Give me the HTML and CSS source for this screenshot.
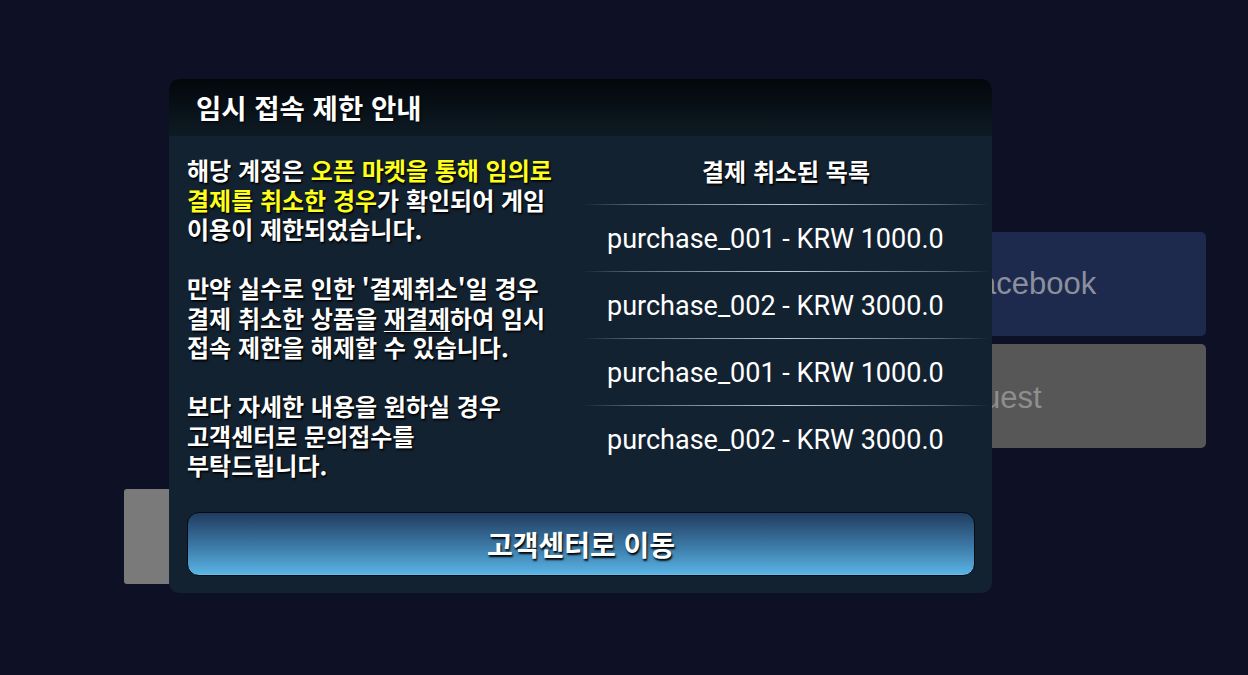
FILE: index.html
```html
<!DOCTYPE html>
<html lang="ko">
<head>
<meta charset="utf-8">
<title>임시 접속 제한 안내</title>
<link rel="stylesheet" href="styles.css">
</head>
<body>
<div class="scene">
  <div class="login">
    <div class="login-btn fb">Facebook</div>
    <div class="login-btn guest">Guest</div>
  </div>
  <div class="left-block"></div>

  <div class="dialog">
    <div class="dlg-header">임시 접속 제한 안내</div>
    <div class="dlg-body">
      <div class="content">
        <div class="notice">
          <p>해당 계정은 <span class="hl">오픈 마켓을 통해 임의로<br>결제를 취소한 경우</span>가 확인되어 게임<br>이용이 제한되었습니다.</p>
          <p>만약 실수로 인한 '결제취소'일 경우<br>결제 취소한 상품을 <u>재결제</u>하여 임시<br>접속 제한을 해제할 수 있습니다.</p>
          <p>보다 자세한 내용을 원하실 경우<br>고객센터로 문의접수를<br>부탁드립니다.</p>
        </div>
        <div class="list">
          <div class="list-title">결제 취소된 목록</div>
          <div class="item">purchase_001 - KRW 1000.0</div>
          <div class="item">purchase_002 - KRW 3000.0</div>
          <div class="item">purchase_001 - KRW 1000.0</div>
          <div class="item">purchase_002 - KRW 3000.0</div>
        </div>
      </div>
      <div class="cs-btn">고객센터로 이동</div>
    </div>
  </div>
</div>
</body>
</html>
```

FILE: styles.css
```css
* { box-sizing: border-box; }
html, body {
  margin: 0;
  padding: 0;
  background: #0e1025;
  width: 1248px;
  height: 675px;
  overflow: hidden;
  font-family: "Noto Sans CJK KR", "Noto Sans", sans-serif;
}
.scene {
  position: relative;
  width: 1248px;
  height: 675px;
}
.login {
  display: flex;
  flex-direction: column;
  gap: 8px;
  padding: 232px 42px 0 760px;
}
.login-btn {
  height: 104px;
  border-radius: 5px;
  display: flex;
  align-items: center;
  padding-left: 200px;
  font-family: "Liberation Sans", Arial, sans-serif;
  font-size: 31px;
}
.fb { background: #1d2a4d; color: #8b909c; }
.guest { background: #575757; color: #8e8e8e; padding-left: 199px; padding-top: 4px; }
.left-block {
  position: absolute;
  left: 124px;
  top: 489px;
  width: 120px;
  height: 95px;
  background: #7a7a7a;
  border-radius: 3px;
}
.dialog {
  position: absolute;
  left: 169px;
  top: 79px;
  width: 823px;
  height: 514px;
  border-radius: 10px;
  overflow: hidden;
  background: #132230;
  color: #fff;
}
.dlg-header {
  height: 57px;
  background: linear-gradient(#03070b, #0e1b24);
  font-size: 27.5px;
  font-weight: 700;
  line-height: 57px;
  padding-left: 27px;
  text-shadow: 1px 1px 2px #000;
}
.dlg-body {
  padding: 0 17px 18px 18px;
}
.content {
  display: flex;
  height: 376px;
  margin-right: -15px;
}
.notice {
  width: 395px;
  padding-top: 19px;
  font-size: 24px;
  font-weight: 700;
  line-height: 29.5px;
  text-shadow: 1px 1px 1px #000, 1px 2px 2px rgba(0,0,0,.6);
}
.notice p { margin: 0 0 29.5px; }
.notice u { text-underline-offset: 3px; text-decoration-thickness: 1px; }
.hl { color: #ffff1c; }
.list {
  flex: 1;
  display: flex;
  flex-direction: column;
}
.list-title {
  height: 68px;
  text-align: center;
  font-size: 24px;
  font-weight: 700;
  line-height: 69px;
  text-shadow: 1px 1px 1px #000, 1px 2px 2px rgba(0,0,0,.6);
}
.item {
  position: relative;
  height: 67px;
  padding-left: 25px;
  font-family: Roboto, "Noto Sans", sans-serif;
  font-size: 27px;
  line-height: 71px;
  color: #fff;
}
.item::before {
  content: "";
  position: absolute;
  left: 0;
  right: 0;
  top: 0;
  height: 1px;
  background: linear-gradient(90deg, rgba(150,170,180,0) 0%, rgba(150,170,180,.5) 12%, rgba(205,216,222,.9) 50%, rgba(150,170,180,.5) 88%, rgba(150,170,180,0) 100%);
}
.cs-btn {
  height: 64px;
  border-radius: 12px;
  border: 1px solid #060c12;
  background: linear-gradient(#213c60, #3d7ba8 55%, #5ab5e7);
  box-shadow: inset 0 -1px 0 rgba(120,200,240,.5);
  text-align: center;
  font-size: 28px;
  font-weight: 700;
  line-height: 62px;
  text-shadow: 1px 2px 2px #000;
}
```
